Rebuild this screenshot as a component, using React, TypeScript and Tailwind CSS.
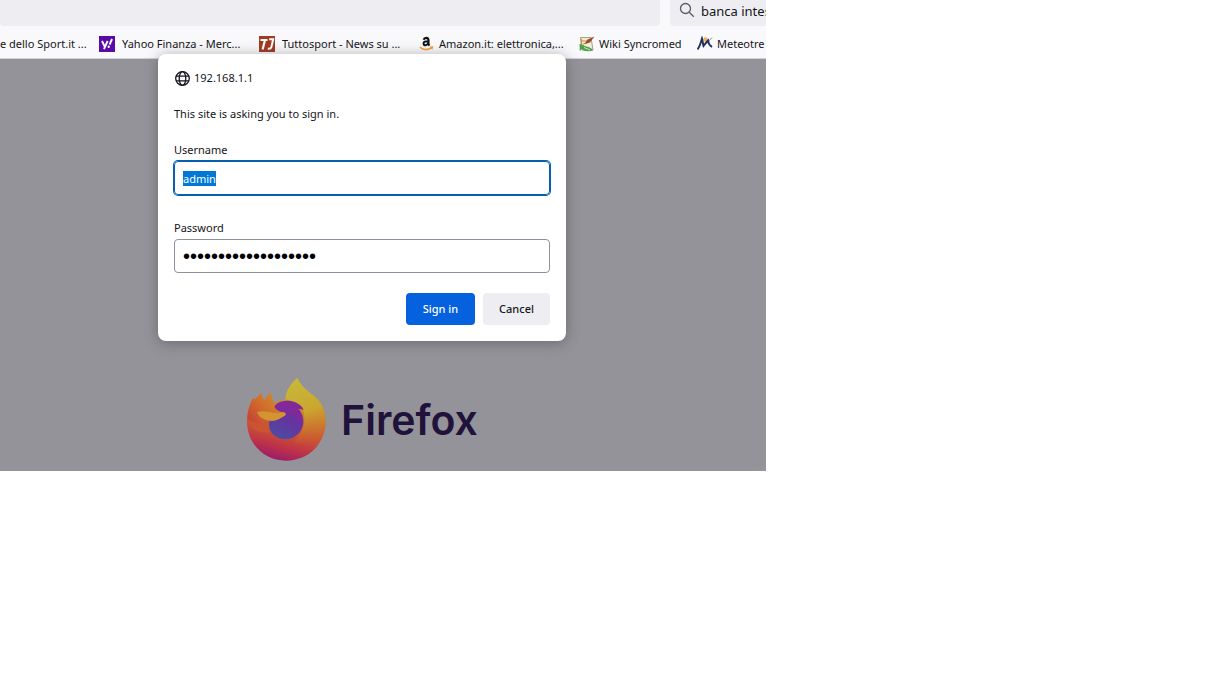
import React from 'react';

const YahooIcon = () => (
  <svg viewBox="0 0 16 16" className="h-4 w-4 shrink-0" aria-hidden="true">
    <rect width="16" height="16" fill="#5a0aa8" />
    <path d="M3 5l2.6 5.4M8.6 5L5 13.2" stroke="#fff" strokeWidth="1.9" fill="none" />
    <path d="M13 3l-2.4 5.6" stroke="#fff" strokeWidth="2" />
    <circle cx="9.7" cy="10.8" r="1.2" fill="#fff" />
  </svg>
);

const TuttosportIcon = () => (
  <svg viewBox="0 0 16 16" className="h-4 w-4 shrink-0" aria-hidden="true">
    <rect width="16" height="16" fill="#a33a20" />
    <path d="M1.5 4h7M6 4L3.6 13.5" stroke="#fff" strokeWidth="2.2" fill="none" />
    <path d="M10.2 3.2h4L12.4 11q-.6 2.2-3.6 1.8" stroke="#fff" strokeWidth="2" fill="none" />
  </svg>
);

const AmazonIcon = () => (
  <svg viewBox="0 0 16 16" className="h-4 w-4 shrink-0" aria-hidden="true">
    <path d="M4.600 3.800Q5.200 1.900 7.300 1.900q2.200.1 2.200 2.300v4.200l1 1.200M9.300 5.200Q4.600 5 4.600 7.500q.1 2 2 1.800 2.200-.3 2.700-2.200" stroke="#111" strokeWidth="2.100" fill="none" />
    <path d="M.8 11.200q5.500 4.400 11.400.8M11 11.200l2.400-.2-.6 2.200" stroke="#f2a33a" strokeWidth="1.500" fill="none" />
  </svg>
);

const WikiIcon = () => (
  <svg viewBox="0 0 16 16" className="h-4 w-4 shrink-0" aria-hidden="true">
    <path d="M1.500 1.500h10.500l2 12.500h-11z" fill="#f3eedc" stroke="#a3a084" />
    <path d="M2.500 3v5M3 5h5M4 8l4-1" stroke="#d48a3c" strokeWidth="1.200" />
    <path d="M15.500.5L8.500 3.500 5.500 8l5.500-1.500z" fill="#9a4a2c" />
    <path d="M.5 8c3 0 4.500 2 7 2.500 2.500.3 5 1.500 6.500 4-4 1.300-9.500 1-11-1.500L.8 15z" fill="#4fa04a" />
    <path d="M5 11.500l6 2.500" stroke="#c9e8bf" />
  </svg>
);

const MeteoIcon = () => (
  <svg viewBox="0 0 16 16" className="h-4 w-4 shrink-0" aria-hidden="true">
    <circle cx="8.500" cy="3.500" r="2.200" fill="#f0b25a" />
    <path d="M.5 13.500C3 10.500 4 6 5 2.500c.8 2.500.8 5 1.500 7.500C8 8 9.500 6 11 4.500c.2 2.500 1 4.500 4 6.500" stroke="#1f2f5c" strokeWidth="1.900" fill="none" />
    <path d="M12 5l3-3.500" stroke="#8a8fa8" />
  </svg>
);

const GlobeIcon = () => (
  <svg viewBox="0 0 16 16" className="h-4 w-4 shrink-0" fill="none" stroke="#15141a" strokeWidth="1.300" aria-hidden="true">
    <circle cx="8.500" cy="8.500" r="6.800" />
    <ellipse cx="8.500" cy="8.500" rx="3.300" ry="6.800" />
    <path d="M2 6.200h13M2 10.800h13" />
  </svg>
);

const SearchIcon = () => (
  <svg viewBox="0 0 16 16" className="h-4 w-4 shrink-0" fill="none" stroke="#5b5b66" strokeWidth="1.300" aria-hidden="true">
    <circle cx="6.500" cy="6.500" r="5" />
    <path d="M10.200 10.200l4.600 4.600" />
  </svg>
);

const FirefoxLogo = () => (
  <svg viewBox="21 24 240 252" className="h-[84px] w-20 shrink-0" aria-hidden="true">
    <defs>
      <linearGradient id="body" x1="0.65" y1="0.1" x2="0.42" y2="1">
        <stop offset="0" stopColor="#cfae30" />
        <stop offset="0.35" stopColor="#cf7c2c" />
        <stop offset="0.62" stopColor="#cb5532" />
        <stop offset="0.82" stopColor="#bf3347" />
        <stop offset="1" stopColor="#9c1c68" />
      </linearGradient>
      <linearGradient id="flame" x1="0.4" y1="0" x2="0.6" y2="1">
        <stop offset="0" stopColor="#c6b93a" />
        <stop offset="0.5" stopColor="#cba62f" />
        <stop offset="1" stopColor="#c8682d" stopOpacity="0" />
      </linearGradient>
      <linearGradient id="head" x1="0.9" y1="0.1" x2="0.1" y2="0.8">
        <stop offset="0" stopColor="#d28f2b" />
        <stop offset="0.55" stopColor="#cf6c2b" />
        <stop offset="1" stopColor="#c64537" />
      </linearGradient>
      <linearGradient id="globe" x1="0.8" y1="0" x2="0.3" y2="1">
        <stop offset="0" stopColor="#80289c" />
        <stop offset="0.5" stopColor="#64359f" />
        <stop offset="1" stopColor="#4c4da2" />
      </linearGradient>
    </defs>
    <path d="M48 88L42 84C32 104 24 126 24 154C24 222 76 272 142 272C210 272 260 220 260 154C260 122 248 98 230 82C206 64 186 48 175 24C160 38 142 56 139 88L104 98Z" fill="url(#body)" />
    <path d="M175 24C160 38 142 56 139 88C160 90 180 100 191 118C205 155 190 195 166 214C200 240 250 200 257 160C262 118 242 94 225 78C205 62 184 48 175 24Z" fill="url(#flame)" />
    <circle cx="139" cy="154" r="54" fill="url(#globe)" />
    <path d="M106 110C118 90 158 86 182 104C190 110 192 116 194 120C184 116 176 117 170 116C184 126 190 144 190 160C178 136 150 124 128 126Z" fill="#81289b" />
    <path d="M68 66C62 74 55 80 48 88L42 84C34 100 26 118 25 146C40 172 62 182 92 172C88 164 88 158 92 152C110 154 122 146 134 139C142 134 142 130 134 127C124 126 116 122 110 116C105 110 105 104 105 98C99 88 97 80 98 67C88 74 80 82 76 90C70 84 67 76 68 66Z" fill="url(#head)" />
    <path d="M54 126C70 122 86 124 102 128C112 130 124 130 134 127C142 130 142 134 134 139C120 148 110 154 92 152C74 150 60 142 54 126Z" fill="#d39531" />
    <path d="M25 146C60 168 70 160 92 152C86 164 90 176 97 188C70 190 36 184 25 146Z" fill="#cb5532" />
  </svg>
);

const bookmarks = [
  { title: 'Yahoo Finanza - Merc...', icon: <YahooIcon />, style: 'w-40 gap-[7px]' },
  { title: 'Tuttosport - News su ...', icon: <TuttosportIcon />, style: 'w-40 gap-[7px]' },
  { title: 'Amazon.it: elettronica,...', icon: <AmazonIcon />, style: 'w-40 gap-1' },
  { title: 'Wiki Syncromed', icon: <WikiIcon />, style: 'w-[118px] gap-1' },
  { title: 'Meteotre', icon: <MeteoIcon />, style: 'gap-1' },
];

const SignInDialog: React.FC = () => {
  return (
    <form
      role="dialog"
      aria-label="Sign in"
      onSubmit={(e) => e.preventDefault()}
      className="relative -mt-[5px] w-full max-w-[408px] rounded-lg bg-white p-4 text-[#15141a] shadow-[0_2px_14px_rgba(58,57,68,0.45)]"
    >
      <div className="flex h-4 items-center gap-1">
        <GlobeIcon />
        <span>192.168.1.1</span>
      </div>
      <p className="mt-5">This site is asking you to sign in.</p>
      <label htmlFor="username" className="mt-5 block">Username</label>
      <input
        id="username"
        type="text"
        defaultValue="admin"
        autoFocus
        onFocus={(e) => e.target.select()}
        className="mt-[3px] block h-[34px] w-full rounded border border-[#0560b0] px-2 outline-none ring-1 ring-[#0560b0] selection:bg-[#0078d7] selection:text-white"
      />
      <label htmlFor="password" className="mt-6 block pt-px">Password</label>
      <input
        id="password"
        type="password"
        defaultValue="administratoraccess"
        className="mt-[3px] block h-[34px] w-full rounded border border-[#8f8f9d] px-2 font-['Liberation_Sans',sans-serif] text-[20px] text-black outline-none"
      />
      <div className="mt-5 flex justify-end gap-2 font-medium">
        <button type="submit" className="h-8 w-[69px] rounded bg-[#0561de] text-white">Sign in</button>
        <button type="button" className="h-8 w-[67px] rounded bg-[#eeeef2]">Cancel</button>
      </div>
    </form>
  );
};

export default function App() {
  return (
    <div className="min-h-screen bg-white font-['Noto_Sans',sans-serif] text-[11px] leading-4 text-[#15141a]">
      <div className="w-full max-w-[766px] overflow-hidden">
        <header className="border-b border-[#cfcfd6] bg-[#f9f9fb]">
          <div className="flex h-[26px] gap-[10px]">
            <div className="flex-1 rounded-b bg-[#eeeef2]" />
            <label className="flex w-24 items-start gap-[6px] overflow-hidden rounded-bl bg-[#eeeef2] pt-[2px] pl-[9px]">
              <SearchIcon />
              <input
                type="text"
                aria-label="Search"
                defaultValue="banca intesa"
                className="w-24 shrink-0 bg-transparent text-[13px] leading-[18px] outline-none"
              />
            </label>
          </div>
          <nav className="flex h-8 items-center pt-1 whitespace-nowrap">
            <a href="#" className="w-[99px] shrink-0">e dello Sport.it ...</a>
            {bookmarks.map((bookmark) => (
              <a key={bookmark.title} href="#" className={`flex shrink-0 items-center ${bookmark.style}`}>
                {bookmark.icon}
                {bookmark.title}
              </a>
            ))}
          </nav>
        </header>
        <main className="flex flex-col items-center bg-[#949399] pr-[42px] pb-[9px]">
          <SignInDialog />
          <div className="mt-[37px] flex items-center gap-[15px]">
            <FirefoxLogo />
            <span className="font-['Inter',sans-serif] text-[41px] font-semibold text-[#20123a]">Firefox</span>
          </div>
        </main>
      </div>
    </div>
  );
}
